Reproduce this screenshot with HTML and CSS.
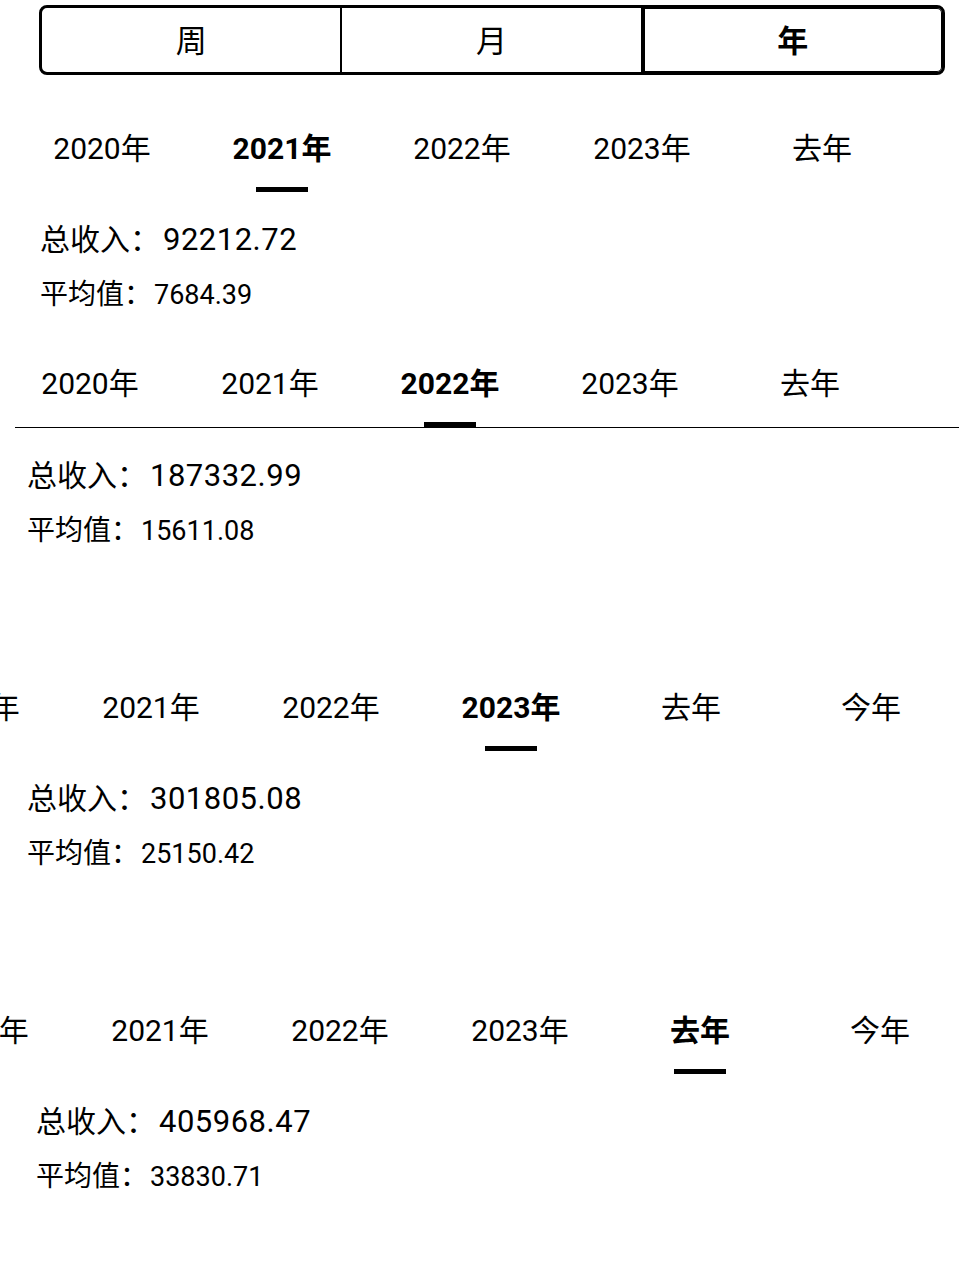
FILE: index.html
```html
<!DOCTYPE html>
<html lang="zh-CN">
<head>
<meta charset="utf-8">
<title>收入统计</title>
<link rel="stylesheet" href="styles.css">
</head>
<body>
  <div class="segmented">
    <div class="segment">周</div>
    <div class="segment">月</div>
    <div class="segment is-active">年</div>
  </div>

  <section class="panel panel-1">
    <div class="tabs">
      <div class="strip strip-1">
        <div class="tab"><span class="tab-label">2020年</span><span class="bar"></span></div>
        <div class="tab is-active"><span class="tab-label">2021年</span><span class="bar"></span></div>
        <div class="tab"><span class="tab-label">2022年</span><span class="bar"></span></div>
        <div class="tab"><span class="tab-label">2023年</span><span class="bar"></span></div>
        <div class="tab"><span class="tab-label">去年</span><span class="bar"></span></div>
        <div class="tab"><span class="tab-label">今年</span><span class="bar"></span></div>
      </div>
    </div>
    <div class="summary">
      <div class="total"><span class="label">总收入：</span><span class="num">92212.72</span></div>
      <div class="avg"><span class="label">平均值：</span><span class="num">7684.39</span></div>
    </div>
  </section>

  <section class="panel panel-2">
    <div class="tabs tabs-lined">
      <div class="strip strip-2">
        <div class="tab"><span class="tab-label">2020年</span><span class="bar"></span></div>
        <div class="tab"><span class="tab-label">2021年</span><span class="bar"></span></div>
        <div class="tab is-active"><span class="tab-label">2022年</span><span class="bar"></span></div>
        <div class="tab"><span class="tab-label">2023年</span><span class="bar"></span></div>
        <div class="tab"><span class="tab-label">去年</span><span class="bar"></span></div>
        <div class="tab"><span class="tab-label">今年</span><span class="bar"></span></div>
      </div>
    </div>
    <div class="summary">
      <div class="total"><span class="label">总收入：</span><span class="num">187332.99</span></div>
      <div class="avg"><span class="label">平均值：</span><span class="num">15611.08</span></div>
    </div>
  </section>

  <section class="panel panel-3">
    <div class="tabs">
      <div class="strip strip-3">
        <div class="tab"><span class="tab-label">2020年</span><span class="bar"></span></div>
        <div class="tab"><span class="tab-label">2021年</span><span class="bar"></span></div>
        <div class="tab"><span class="tab-label">2022年</span><span class="bar"></span></div>
        <div class="tab is-active"><span class="tab-label">2023年</span><span class="bar"></span></div>
        <div class="tab"><span class="tab-label">去年</span><span class="bar"></span></div>
        <div class="tab"><span class="tab-label">今年</span><span class="bar"></span></div>
      </div>
    </div>
    <div class="summary">
      <div class="total"><span class="label">总收入：</span><span class="num">301805.08</span></div>
      <div class="avg"><span class="label">平均值：</span><span class="num">25150.42</span></div>
    </div>
  </section>

  <section class="panel panel-4">
    <div class="tabs">
      <div class="strip strip-4">
        <div class="tab"><span class="tab-label">2020年</span><span class="bar"></span></div>
        <div class="tab"><span class="tab-label">2021年</span><span class="bar"></span></div>
        <div class="tab"><span class="tab-label">2022年</span><span class="bar"></span></div>
        <div class="tab"><span class="tab-label">2023年</span><span class="bar"></span></div>
        <div class="tab is-active"><span class="tab-label">去年</span><span class="bar"></span></div>
        <div class="tab"><span class="tab-label">今年</span><span class="bar"></span></div>
      </div>
    </div>
    <div class="summary">
      <div class="total"><span class="label">总收入：</span><span class="num">405968.47</span></div>
      <div class="avg"><span class="label">平均值：</span><span class="num">33830.71</span></div>
    </div>
  </section>
</body>
</html>
```

FILE: styles.css
```css
* {
  box-sizing: border-box;
}

html, body {
  margin: 0;
  padding: 0;
  background: #fff;
}

body {
  width: 959px;
  height: 1280px;
  overflow: hidden;
  font-family: Roboto, "Noto Sans CJK SC", "Noto Sans", sans-serif;
  color: #000;
}

/* segmented control */
.segmented {
  display: flex;
  height: 70px;
  margin: 5px 14px 0 39px;
  border: 3px solid #000;
  border-radius: 8px;
}

.segment {
  flex: 1 1 0;
  min-width: 0;
  display: flex;
  align-items: center;
  justify-content: center;
  padding-top: 3px;
  font-size: 31px;
  line-height: 1;
}

.segment + .segment {
  border-left: 2px solid #000;
}

.segment.is-active {
  font-weight: 700;
  border-left-width: 3px;
  border-radius: 0 5px 5px 0;
  box-shadow: inset 0 0 0 1px #000;
}

/* panels */
.panel-1 { padding-top: 53px; }
.panel-2 { padding-top: 48px; }
.panel-3 { padding-top: 136px; }
.panel-4 { padding-top: 136px; }

/* tabs */
.tabs {
  overflow: hidden;
}

.tabs-lined {
  margin-left: 15px;
  border-bottom: 1px solid #000;
}

.tabs-lined .strip-2 {
  margin-left: -15px;
}

.strip {
  display: flex;
}

.strip-1 { margin-left: 12px; }
.strip-3 { margin-left: -119px; }
.strip-4 { margin-left: -110px; }

.tab {
  flex: 0 0 180px;
  display: flex;
  flex-direction: column;
  align-items: center;
}

.tab-label {
  height: 40px;
  line-height: 42px;
  font-size: 30px;
  white-space: nowrap;
}

.bar {
  width: 52px;
  height: 5px;
  margin-top: 19px;
  background: transparent;
}

.tab.is-active .tab-label {
  font-weight: 700;
}

.tab.is-active .bar {
  background: #000;
}

.tabs-lined .tab.is-active .bar {
  margin-bottom: -1px;
  box-shadow: -10px 0 0 #fff, 4px 0 0 #fff;
}

/* summary */
.summary {
  padding-top: 26px;
}

.panel-1 .summary { padding-left: 40px; }
.panel-2 .summary { padding-left: 27px; }
.panel-3 .summary { padding-left: 27px; }
.panel-4 .summary { padding-left: 36px; }

.total {
  height: 44px;
  line-height: 44px;
  white-space: nowrap;
}

.total .label {
  font-size: 30px;
}

.total .num {
  margin-left: 3px;
  font-size: 31px;
  letter-spacing: 0.5px;
}

.avg {
  height: 40px;
  line-height: 40px;
  margin-top: 13px;
  white-space: nowrap;
}

.avg .label {
  font-size: 28px;
}

.avg .num {
  margin-left: 2px;
  font-size: 27px;
}
```
